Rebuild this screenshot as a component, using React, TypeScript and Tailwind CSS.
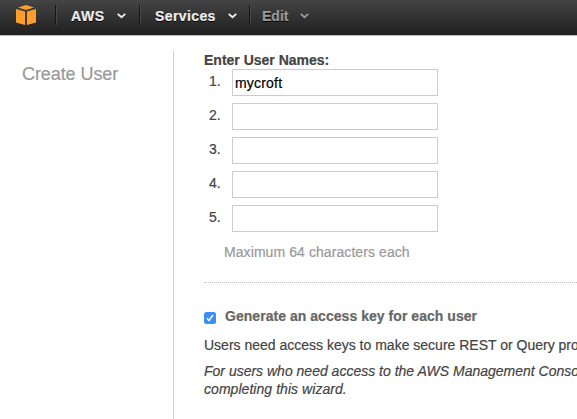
import React from "react";

function Chevron({ className }: { className: string }) {
  return (
    <svg className={className} width="9" height="6" viewBox="0 0 9 6" fill="none">
      <path d="M0.7 0.9 L4.5 4.3 L8.3 0.9" stroke="currentColor" strokeWidth="1.9" />
    </svg>
  );
}

function Divider() {
  return <div className="h-5 w-px shrink-0 bg-[#151515] shadow-[1px_0_0_#484848]" />;
}

function Cube() {
  return (
    <svg width="20" height="20" viewBox="0 0 20 20" fill="#ff9e2c">
      <path d="M2 2.6 L10 0 L18 2.6 L10 5Z" />
      <path d="M0 4 L9.1 6.4 V20 L0 17.6Z" />
      <path d="M20 4 L10.9 6.4 V20 L20 17.6Z" />
    </svg>
  );
}

const names = ["mycroft", "", "", "", ""];

export default function App() {
  return (
    <div className="h-[419px] w-[577px] overflow-hidden bg-white font-['Liberation_Sans',Arial,sans-serif] text-sm text-[#444] [-webkit-text-stroke:0.2px]">
      <header className="flex h-9 items-start border-b border-[#bbb] bg-linear-to-b from-[#444] to-[#202020] pt-[5px] font-bold leading-5 text-[#eee] [text-shadow:0_1px_0_#000]">
        <div className="w-[39px] shrink-0 pl-4"><Cube /></div>
        <div className="w-4 shrink-0 pl-4"><Divider /></div>
        <div className="flex w-[84px] shrink-0 pl-4">
          <span className="w-[46px] pt-px tracking-[0.6px]">AWS</span>
          <Chevron className="mt-2" />
        </div>
        <Divider />
        <div className="flex w-[109px] shrink-0 pl-[15px]">
          <span className="w-[73px] pt-px tracking-[0.4px]">Services</span>
          <Chevron className="mt-2" />
        </div>
        <Divider />
        <div className="flex pl-3 text-[#999]">
          <span className="w-[38px] pt-px">Edit</span>
          <Chevron className="mt-2" />
        </div>
      </header>

      <div className="flex pt-[15px]">
        <aside className="h-[368px] w-[174px] shrink-0 border-r border-[#ccc] pl-[22px] pt-[11px] text-lg leading-6 tracking-[-0.08px] text-[#999]">
          Create User
        </aside>
        <main className="w-[403px] shrink-0 overflow-hidden whitespace-nowrap pl-[30px]">
          <h1 className="h-[18px] font-bold leading-[18px]">Enter User Names:</h1>
          <ol className="flex flex-col gap-[7px]">
            {names.map((name, i) => (
              <li key={i} className="flex h-[27px]">
                <span className="w-7 shrink-0 pl-[5px] leading-[25px]">{i + 1}.</span>
                <input
                  defaultValue={name}
                  className="h-[27px] w-[206px] border border-[#ccc] bg-white px-[2px] text-sm tracking-[0.2px] text-black outline-none"
                />
              </li>
            ))}
          </ol>
          <p className="pl-5 pt-[11px] leading-[18px] tracking-[0.08px] text-[#999]">Maximum 64 characters each</p>
          <div className="mt-[21px] border-t border-dotted border-[#bbb]" />
          <label className="flex pt-[24px] font-bold leading-[18px] text-[#666]">
            <span className="mt-[5px] flex size-3 items-center justify-center rounded-[2.5px] bg-[#3b8df8]">
              <svg width="8" height="8" viewBox="0 0 8 8" fill="none">
                <path d="M1 4.2 L3 6.5 L7 1" stroke="white" strokeWidth="1.5" />
              </svg>
            </span>
            <span className="pl-[9px] tracking-[0.04px]">Generate an access key for each user</span>
          </label>
          <p className="pt-[11px] leading-[18px]">Users need access keys to make secure REST or Query protocol</p>
          <p className="pt-2 italic leading-[18px]">
            For users who need access to the AWS Management Console
            <br />
            <span className="tracking-[0.05px]">completing this wizard.</span>
          </p>
        </main>
      </div>
    </div>
  );
}
